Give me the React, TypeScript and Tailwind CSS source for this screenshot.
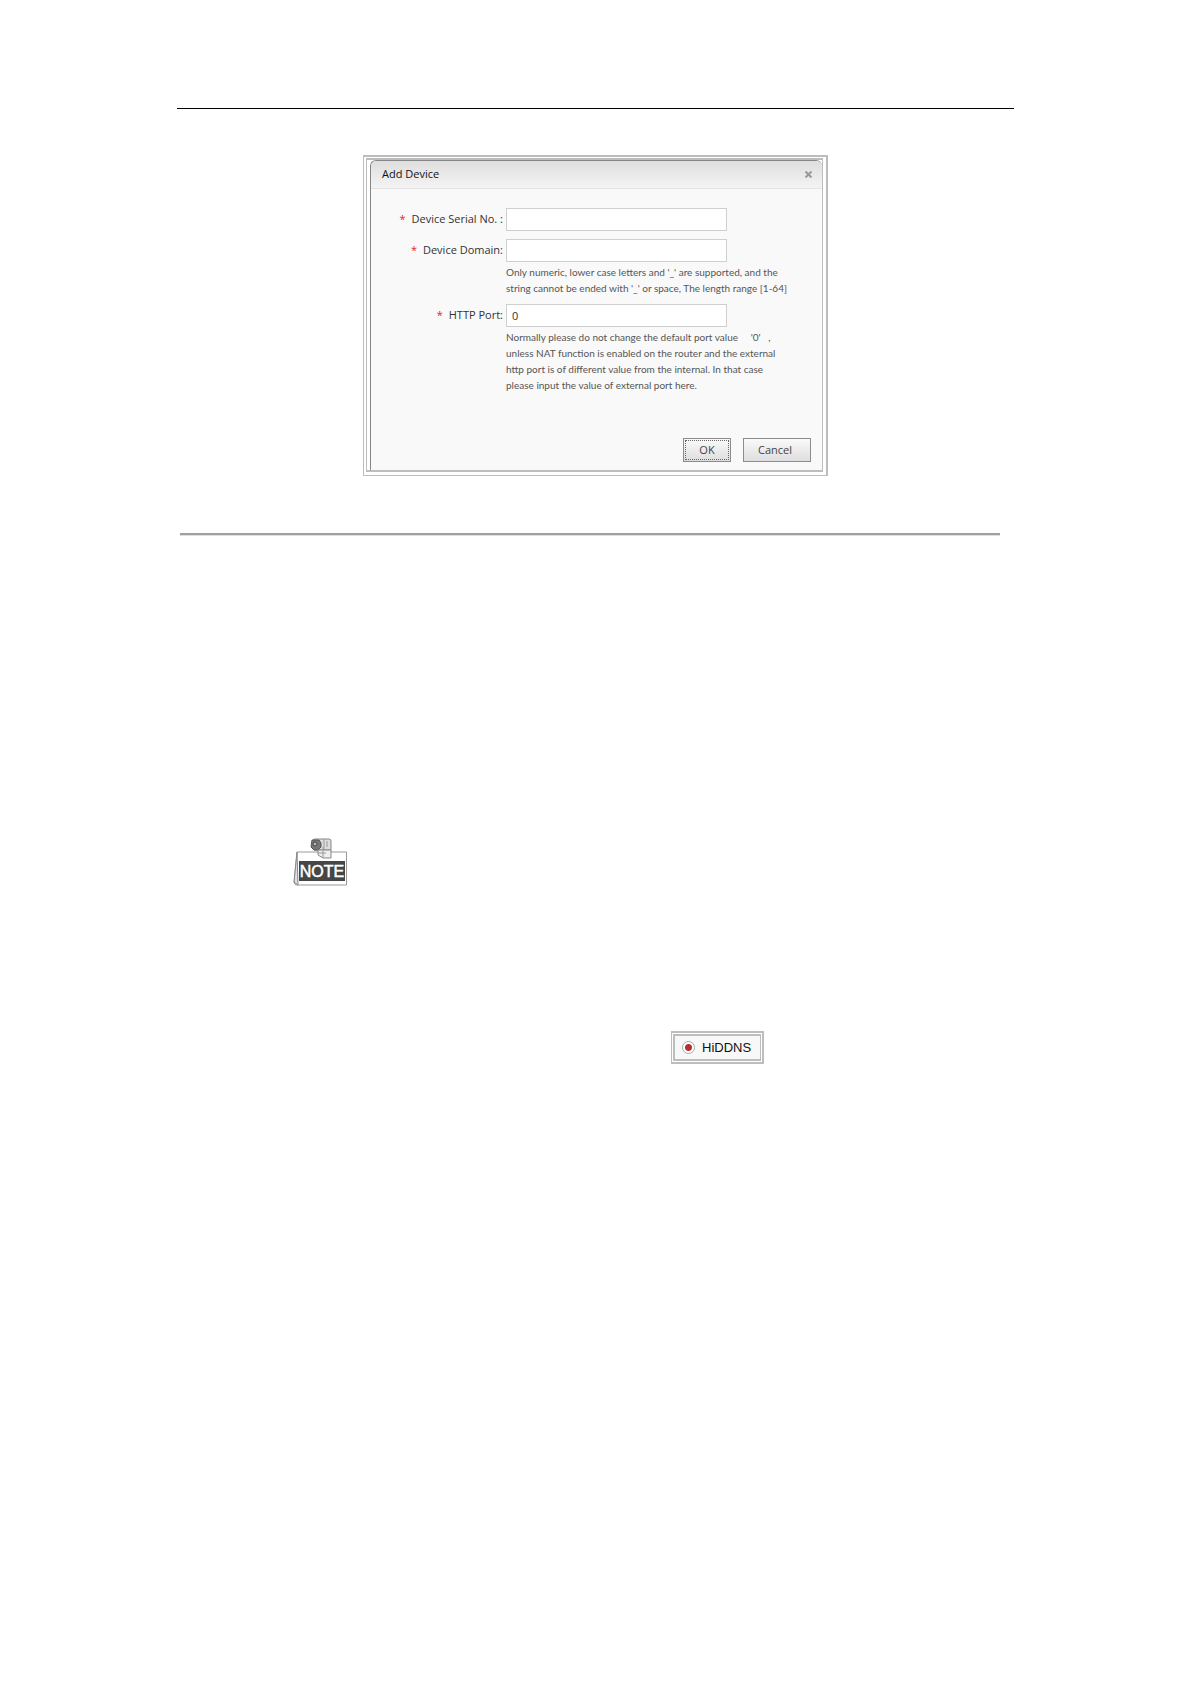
import React, { useState } from 'react';

interface FieldProps {
    id: string;
    label: string;
    value: string;
    onChange: (val: string) => void;
    hint?: string;
}

function Field({ id, label, value, onChange, hint }: FieldProps) {
    return (
        <div className="grid grid-cols-[132px_1fr] gap-x-[3px]">
            <label htmlFor={id} className="flex items-center justify-end gap-1.5 text-[11px] text-[#333] whitespace-nowrap">
                <span className="text-[#e8202a]">*</span>
                {label}
            </label>
            <input
                id={id}
                type="text"
                value={value}
                onChange={(e) => onChange(e.target.value)}
                className="w-[221px] h-[23px] px-[5px] bg-white border border-[#cfcfcf] text-[11px] text-[#333] outline-none"
            />
            {hint && (
                <p className="col-start-2 pt-0.5 font-['Lato',sans-serif] text-[10px] leading-4 text-[#555] whitespace-pre">{hint}</p>
            )}
        </div>
    );
}

function AddDeviceDialog() {
    const [serial, setSerial] = useState('');
    const [domain, setDomain] = useState('');
    const [port, setPort] = useState('0');

    return (
        <div className="w-[465px] max-w-full mx-auto border border-[#bdbdbd] border-t-2 border-r-2 p-0.5 pt-px pr-[3px] pb-[3px]">
            <div className="border-2 border-[#bdbdbd] border-l border-r p-0.5 pl-[3px] pt-0 pr-0 pb-0">
                <div
                    role="dialog"
                    aria-labelledby="add-device-title"
                    className="rounded-t-md border-t border-l border-[#858585] bg-[#f9f9f9]"
                >
                    <div className="h-7 pl-[11px] pr-2.5 rounded-t-md flex items-center justify-between bg-linear-to-b from-[#dedede] to-[#f4f4f4] border-b border-[#e4e4e4]">
                        <h2 id="add-device-title" className="text-[11px] text-[#111]">Add Device</h2>
                        <button aria-label="Close" className="text-[#999]">
                            <svg width="7" height="7" viewBox="0 0 7 7" stroke="currentColor" strokeWidth="2">
                                <path d="M0.5 0.5L6.5 6.5M6.5 0.5L0.5 6.5" />
                            </svg>
                        </button>
                    </div>
                    <form className="pt-[19px]" onSubmit={(e) => e.preventDefault()}>
                        <div className="flex flex-col gap-2">
                            <Field id="serial" label="Device Serial No. :" value={serial} onChange={setSerial} />
                            <Field
                                id="domain"
                                label="Device Domain:"
                                value={domain}
                                onChange={setDomain}
                                hint={"Only numeric, lower case letters and '_' are supported, and the\nstring cannot be ended with '_' or space, The length range [1-64]"}
                            />
                            <Field
                                id="port"
                                label="HTTP Port:"
                                value={port}
                                onChange={setPort}
                                hint={"Normally please do not change the default port value     '0'   ,\nunless NAT function is enabled on the router and the external\nhttp port is of different value from the internal. In that case\nplease input the value of external port here."}
                            />
                        </div>
                        <div className="flex justify-end gap-3 pt-[45px] pr-[11px] pb-2">
                            <button
                                type="submit"
                                className="w-12 h-6 p-px border border-[#8c8c8c] bg-linear-to-b from-[#fafafa] to-[#dedede] text-[11px] text-[#444]"
                            >
                                <span className="flex h-full items-center justify-center border border-dotted border-[#666]">OK</span>
                            </button>
                            <button
                                type="button"
                                className="w-[68px] h-6 pr-1 border border-[#8c8c8c] bg-linear-to-b from-[#fafafa] to-[#dedede] text-[11px] text-[#444]"
                            >
                                Cancel
                            </button>
                        </div>
                    </form>
                </div>
            </div>
        </div>
    );
}

function NoteIcon() {
    return (
        <svg width="54" height="48" viewBox="0 0 54 48" role="img" aria-label="Note" className="block">
            <path d="M4 14H53.5V47H3L1 45Z" fill="#fff" stroke="#999" />
            <path d="M4 14L1 44L5 47Z" fill="#ddd" stroke="#888" />
            <rect x="6" y="23" width="46" height="20" fill="#464646" />
            <text x="29" y="39" textAnchor="middle" fontSize="16" fill="#fff" stroke="#fff" strokeWidth="0.5" className="font-['Liberation_Sans',sans-serif]">
                NOTE
            </text>
            <path d="M21 1H36Q38 1 38 3V12H21Z" fill="#ddd" stroke="#888" />
            <path d="M19 2H26L28 5V9L25 12H21L18 9Z" fill="#777" stroke="#555" />
            <circle cx="22" cy="6" r="2" fill="#bbb" stroke="#444" />
            <path d="M31 1V12M34 3V9" stroke="#999" />
            <path d="M25 12H38V20H30L25 17Z" fill="#eee" stroke="#888" />
            <path d="M30 9V20M25 15H33" stroke="#999" />
        </svg>
    );
}

export default function App() {
    const [ddnsType, setDdnsType] = useState('hiddns');

    return (
        <main className="min-h-screen bg-white pt-[108px] pb-12 font-['Open_Sans','Noto_Sans',sans-serif]">
            <hr className="mx-[177px] border-t border-black" />
            <div className="pt-[46px]">
                <AddDeviceDialog />
            </div>
            <hr className="mt-[57px] ml-[180px] mr-[191px] h-[3px] border-t-2 border-b border-t-[#a0a0a0] border-b-[#dedede]" />
            <div className="pt-[302px] pl-[293px]">
                <NoteIcon />
            </div>
            <div className="pt-[145px] pl-[671px]">
                <div className="w-[93px] border-2 border-[#bdbdbd] border-l p-px">
                    <label className="flex h-[27px] items-center gap-[7px] pl-[7px] border-2 border-[#bdbdbd] border-r bg-[#f8f8f8] font-['Liberation_Sans',sans-serif] text-[13px] text-[#111]">
                        <input
                            type="radio"
                            name="ddns"
                            value="hiddns"
                            checked={ddnsType === 'hiddns'}
                            onChange={(e) => setDdnsType(e.target.value)}
                            className="size-[13px] shrink-0 appearance-none rounded-full border border-[#aaa] bg-white bg-[radial-gradient(circle,#b92d2d_3px,transparent_4px)]"
                        />
                        HiDDNS
                    </label>
                </div>
            </div>
        </main>
    );
}
